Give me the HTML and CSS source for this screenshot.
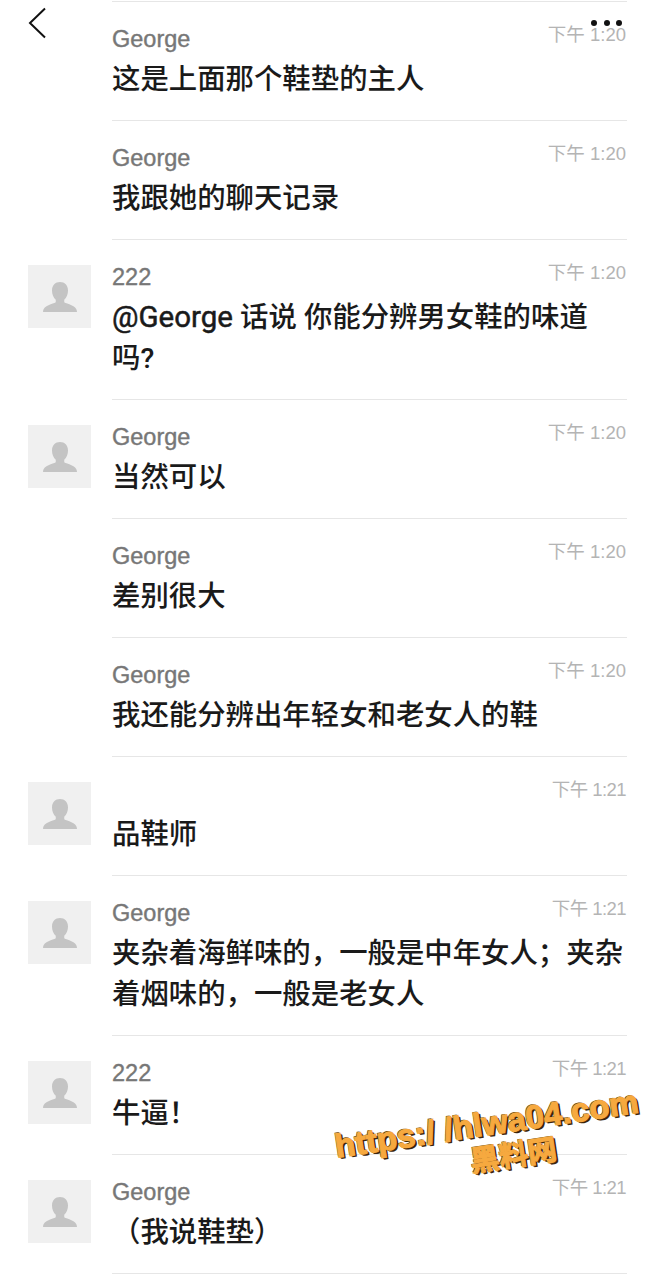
FILE: index.html
```html
<!DOCTYPE html>
<html lang="zh-CN">
<head>
  <meta charset="UTF-8" />
  <meta name="viewport" content="width=device-width, initial-scale=1.0"/>
  <title>聊天记录</title>
  <link rel="stylesheet" href="styles.css">
</head>
<body>
  <!-- Default avatar figure, reused by every row -->
  <svg class="defs" width="0" height="0">
    <symbol id="person" viewBox="0 0 36 34">
      <path d="M18 1c5 0 8.500 3.500 8.500 9 0 4-1.500 7.500-4 10v2.500c3 2 13 3 13.500 9.500v1H0v-1c.5-6.500 10.500-7.500 13.500-9.500V20c-2.500-2.500-4-6-4-10 0-5.500 3.500-9 8.500-9z" fill="#c4c4c4"/>
    </symbol>
  </svg>

  <!-- Top buttons lie over the list -->
  <svg class="back" width="20" height="32" viewBox="0 0 20 32"><path d="M18 1.500 3 16l15 14.500" fill="none" stroke="#111" stroke-width="2"/></svg>
  <div class="more"><span></span><span></span><span></span></div>

  <!-- Message list -->
  <div class="list">
    <div class="row">
      <div class="avatar-slot"></div>
      <div class="body">
        <div class="head"><span class="name">George</span><span class="time">下午 1:20</span></div>
        <div class="msg">这是上面那个鞋垫的主人</div>
      </div>
    </div>
    <div class="row">
      <div class="avatar-slot"></div>
      <div class="body">
        <div class="head"><span class="name">George</span><span class="time">下午 1:20</span></div>
        <div class="msg">我跟她的聊天记录</div>
      </div>
    </div>
    <div class="row">
      <div class="avatar-slot"><div class="avatar"><svg width="34" height="32"><use href="#person"/></svg></div></div>
      <div class="body">
        <div class="head"><span class="name">222</span><span class="time">下午 1:20</span></div>
        <div class="msg"><span class="latin">@George</span> 话说 你能分辨男女鞋的味道<br>吗?</div>
      </div>
    </div>
    <div class="row">
      <div class="avatar-slot"><div class="avatar"><svg width="34" height="32"><use href="#person"/></svg></div></div>
      <div class="body">
        <div class="head"><span class="name">George</span><span class="time">下午 1:20</span></div>
        <div class="msg">当然可以</div>
      </div>
    </div>
    <div class="row">
      <div class="avatar-slot"></div>
      <div class="body">
        <div class="head"><span class="name">George</span><span class="time">下午 1:20</span></div>
        <div class="msg">差别很大</div>
      </div>
    </div>
    <div class="row">
      <div class="avatar-slot"></div>
      <div class="body">
        <div class="head"><span class="name">George</span><span class="time">下午 1:20</span></div>
        <div class="msg">我还能分辨出年轻女和老女人的鞋</div>
      </div>
    </div>
    <div class="row">
      <div class="avatar-slot"><div class="avatar"><svg width="34" height="32"><use href="#person"/></svg></div></div>
      <div class="body">
        <div class="head"><span class="name"></span><span class="time time-late">下午 1:21</span></div>
        <div class="msg">品鞋师</div>
      </div>
    </div>
    <div class="row">
      <div class="avatar-slot"><div class="avatar"><svg width="34" height="32"><use href="#person"/></svg></div></div>
      <div class="body">
        <div class="head"><span class="name">George</span><span class="time time-late">下午 1:21</span></div>
        <div class="msg">夹杂着海鲜味的，一般是中年女人；夹杂着烟味的，一般是老女人</div>
      </div>
    </div>
    <div class="row">
      <div class="avatar-slot"><div class="avatar"><svg width="34" height="32"><use href="#person"/></svg></div></div>
      <div class="body">
        <div class="head"><span class="name">222</span><span class="time time-late">下午 1:21</span></div>
        <div class="msg">牛逼！</div>
      </div>
    </div>
    <div class="row">
      <div class="avatar-slot"><div class="avatar"><svg width="34" height="32"><use href="#person"/></svg></div></div>
      <div class="body">
        <div class="head"><span class="name">George</span><span class="time time-late">下午 1:21</span></div>
        <div class="msg">（我说鞋垫）</div>
      </div>
    </div>
  </div>

  <!-- Watermark -->
  <div class="mark">
    <div class="mark-url">https:/ /hlwa04.com</div>
    <div class="mark-cn">黑料网</div>
  </div>
</body>
</html>
```

FILE: styles.css
```css
/* ---------- Global Reset ---------- */
* {
  box-sizing: border-box;
  margin: 0;
  padding: 0;
}
html, body {
  height: 100%;
  background-color: #fff;
  color: #1a1a1a;
  font-family: "Liberation Sans", "Noto Sans CJK SC", sans-serif;
  overflow: hidden;
}
body {
  position: relative;
}
.defs {
  position: absolute;
}

/* ---------- Top Buttons ---------- */
.back {
  position: absolute;
  left: 27px;
  top: 7px;
}
.more {
  position: absolute;
  left: 591px;
  top: 20px;
  display: flex;
  gap: 6.500px;
}
.more span {
  width: 6px;
  height: 6px;
  border-radius: 50%;
  background-color: #111;
}

/* ---------- Message List ---------- */
.list {
  padding-top: 2px;
}
.row {
  display: flex;
  padding: 0 28px;
}
.row:first-child .body {
  box-shadow: 0 -1px 0 #e6e6e6;
}
.avatar-slot {
  flex: 0 0 84px;
}
.avatar {
  width: 63px;
  height: 63px;
  margin-top: 25px;
  background-color: #f0f0f0;
  display: flex;
  align-items: flex-end;
  justify-content: center;
  padding-bottom: 15px;
}
.body {
  flex: 1;
  padding: 23px 0 20px;
  border-bottom: 1px solid #e6e6e6;
}
.head {
  display: flex;
  justify-content: space-between;
  height: 28px;
  margin-bottom: 6px;
}
.name {
  font-size: 23.500px;
  line-height: 28px;
  color: #777;
  -webkit-text-stroke: 0.4px #777;
}
.time {
  font-size: 18.500px;
  line-height: 20px;
  color: #b4b4b4;
  margin-right: 1px;
}
.time-late {
  letter-spacing: -0.550px;
}
.msg {
  font-family: Roboto, "Noto Sans CJK SC", sans-serif;
  font-size: 28.400px;
  line-height: 41px;
  font-weight: 500;
  color: #1a1a1a;
}
.latin {
  font-size: 29.500px;
  font-weight: 400;
  -webkit-text-stroke: 0.5px #1a1a1a;
}

/* ---------- Watermark ---------- */
.mark {
  position: absolute;
  left: 327px;
  top: 1105px;
  width: 324px;
  text-align: center;
  transform: rotate(-8.500deg);
  color: #f6a93f;
  font-weight: 700;
  -webkit-text-stroke: 1.200px #f6a93f;
  text-shadow: 1px 1px 0 #4a3010, 2px 2px 0 #3a2508, -1px -1px 0 #6a4a18;
}
.mark-url {
  font-size: 33px;
  line-height: 38px;
  white-space: nowrap;
}
.mark-cn {
  font-size: 29px;
  line-height: 32px;
  transform: translateX(22px);
}
```
